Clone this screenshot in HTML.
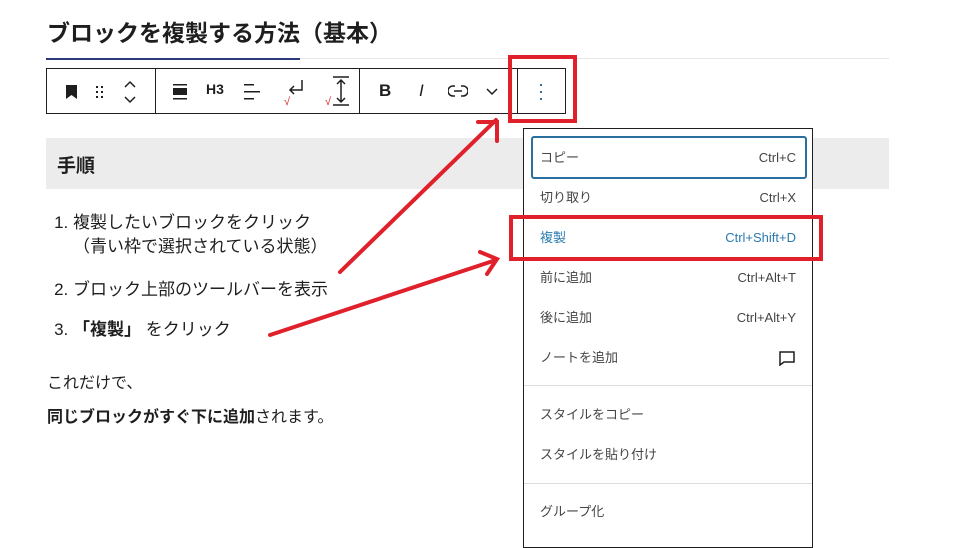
<!DOCTYPE html>
<html><head><meta charset="utf-8"><style>
body{margin:0;width:967px;height:530px;background:#fff;position:relative;overflow:hidden;font-family:"Liberation Sans","Noto Sans CJK JP",sans-serif;color:#1e1e1e}
.abs{position:absolute}
h1{position:absolute;left:47px;top:14px;margin:0;font-size:23px;font-weight:bold}
.tb{left:46px;top:68px;width:520px;height:46px;border:1px solid #1e1e1e;box-sizing:border-box}
.div{position:absolute;top:0;width:1px;height:44px;background:#1e1e1e}
.ic{position:absolute;top:12px;font-size:16px;font-weight:bold}
.menu{left:523px;top:128px;width:290px;height:420px;border:1px solid #1e1e1e;box-sizing:border-box;background:#fff}
.it{position:absolute;left:16px;right:16px;height:20px;line-height:20px;font-size:13px;display:flex;justify-content:space-between;align-items:center}
.sep{position:absolute;left:0;right:0;height:1px;background:#ddd}
.red{position:absolute;border:4px solid #e0202a;box-sizing:border-box}
li{margin-bottom:16px}
</style></head><body>
<h1>ブロックを複製する方法（基本）</h1>
<div class="abs" style="left:46px;top:58px;width:843px;height:1px;background:#e6e6e6"></div>
<div class="abs" style="left:46px;top:58px;width:254px;height:2px;background:#2b3a7a"></div>
<div class="abs tb">
 <div class="div" style="left:108px"></div><div class="div" style="left:312px"></div><div class="div" style="left:470px"></div>
 <svg class="abs" style="left:18px;top:15px" width="14" height="16"><path d="M1 1h11v14l-5.5-4L1 15z" fill="#1e1e1e"/></svg>
 <svg class="abs" style="left:48px;top:15px" width="10" height="16" fill="#1e1e1e"><rect x="1" y="2" width="2" height="2"/><rect x="6" y="2" width="2" height="2"/><rect x="1" y="7" width="2" height="2"/><rect x="6" y="7" width="2" height="2"/><rect x="1" y="12" width="2" height="2"/><rect x="6" y="12" width="2" height="2"/></svg>
 <svg class="abs" style="left:76px;top:10px" width="14" height="26" fill="none" stroke="#1e1e1e" stroke-width="1.5"><path d="M2 8l5-5 5 5M2 18l5 5 5-5"/></svg>
 <svg class="abs" style="left:125px;top:14px" width="16" height="18" fill="#1e1e1e"><rect x="1" y="1" width="14" height="1.5"/><rect x="1" y="5" width="14" height="7"/><rect x="1" y="15" width="14" height="1.5"/></svg>
 <div class="ic" style="left:159px;font-size:14px">H3</div>
 <svg class="abs" style="left:196px;top:14px" width="18" height="18" fill="#1e1e1e"><rect x="1" y="1" width="10" height="1.5"/><rect x="1" y="8" width="16" height="1.5"/><rect x="1" y="15" width="10" height="1.5"/></svg>
 <svg class="abs" style="left:236px;top:8px" width="22" height="30" fill="none" stroke="#1e1e1e" stroke-width="1.5"><path d="M19 3v10H8M11 9l-4 4 4 4"/><text x="1" y="28" font-size="11" fill="#d22" stroke="none">√</text></svg>
 <svg class="abs" style="left:278px;top:6px" width="26" height="32" fill="none" stroke="#1e1e1e" stroke-width="1.5"><path d="M8 2h16M8 30h16M16 5v22M12 9l4-4 4 4M12 23l4 4 4-4"/><text x="0" y="30" font-size="11" fill="#d22" stroke="none">√</text></svg>
 <div class="ic" style="left:332px;font-size:17px">B</div>
 <div class="ic" style="left:372px;font-style:italic;font-weight:normal;font-size:17px">I</div>
 <svg class="abs" style="left:401px;top:15px" width="20" height="14" fill="none" stroke="#1e1e1e" stroke-width="1.5"><path d="M7 2H5a5 5 0 000 10h2M13 2h2a5 5 0 010 10h-2M6 7h8"/></svg>
 <svg class="abs" style="left:439px;top:17px" width="12" height="10" fill="none" stroke="#1e1e1e" stroke-width="1.5"><path d="M1 3l5 5 5-5"/></svg>
 <svg class="abs" style="left:492px;top:14px" width="4" height="18" fill="#2a6f9e"><rect x="1" y="1" width="2" height="2"/><rect x="1" y="8" width="2" height="2"/><rect x="1" y="15" width="2" height="2"/></svg>
</div>
<div class="abs" style="left:46px;top:138px;width:843px;height:51px;background:#ececec"></div>
<div class="abs" style="left:57px;top:151px;font-size:19px;font-weight:bold">手順</div>
<ol class="abs" style="left:33px;top:211px;margin:0;font-size:17px;line-height:24px;padding-left:40px">
<li style="margin-bottom:19px">複製したいブロックをクリック<br>（青い枠で選択されている状態）</li>
<li>ブロック上部のツールバーを表示</li>
<li><b>「複製」</b> をクリック</li>
</ol>
<div class="abs" style="left:47px;top:367px;font-size:16px;line-height:34px">これだけで、<br><b>同じブロックがすぐ下に追加</b>されます。</div>
<div class="abs menu">
 <div class="abs" style="left:7px;top:7px;width:276px;height:43px;border:2px solid #2a6f9e;border-radius:3px;box-sizing:border-box"></div>
 <div class="it" style="top:19px;color:#444"><span>コピー</span><span>Ctrl+C</span></div>
 <div class="it" style="top:59px;color:#444"><span>切り取り</span><span>Ctrl+X</span></div>
 <div class="it" style="top:99px;color:#2a7ab0"><span>複製</span><span>Ctrl+Shift+D</span></div>
 <div class="it" style="top:139px;color:#444"><span>前に追加</span><span>Ctrl+Alt+T</span></div>
 <div class="it" style="top:179px;color:#444"><span>後に追加</span><span>Ctrl+Alt+Y</span></div>
 <div class="it" style="top:219px;color:#444"><span>ノートを追加</span><svg width="18" height="16" fill="none" stroke="#1e1e1e" stroke-width="1.5"><path d="M2 2h14v10H6l-4 3z"/></svg></div>
 <div class="sep" style="top:256px"></div>
 <div class="it" style="top:276px;color:#444"><span>スタイルをコピー</span></div>
 <div class="it" style="top:316px;color:#444"><span>スタイルを貼り付け</span></div>
 <div class="sep" style="top:354px"></div>
 <div class="it" style="top:373px;color:#444"><span>グループ化</span></div>
</div>
<div class="red" style="left:508px;top:55px;width:69px;height:68px"></div>
<div class="red" style="left:509px;top:215px;width:314px;height:46px"></div>
<svg class="abs" style="left:0;top:0" width="967" height="530" fill="none" stroke="#e0202a" stroke-width="4" stroke-linecap="round"><path d="M340 272L496 120M478 122h19v19M270 335L496 260M480 252l17 7-10 15"/></svg>
</body></html>
